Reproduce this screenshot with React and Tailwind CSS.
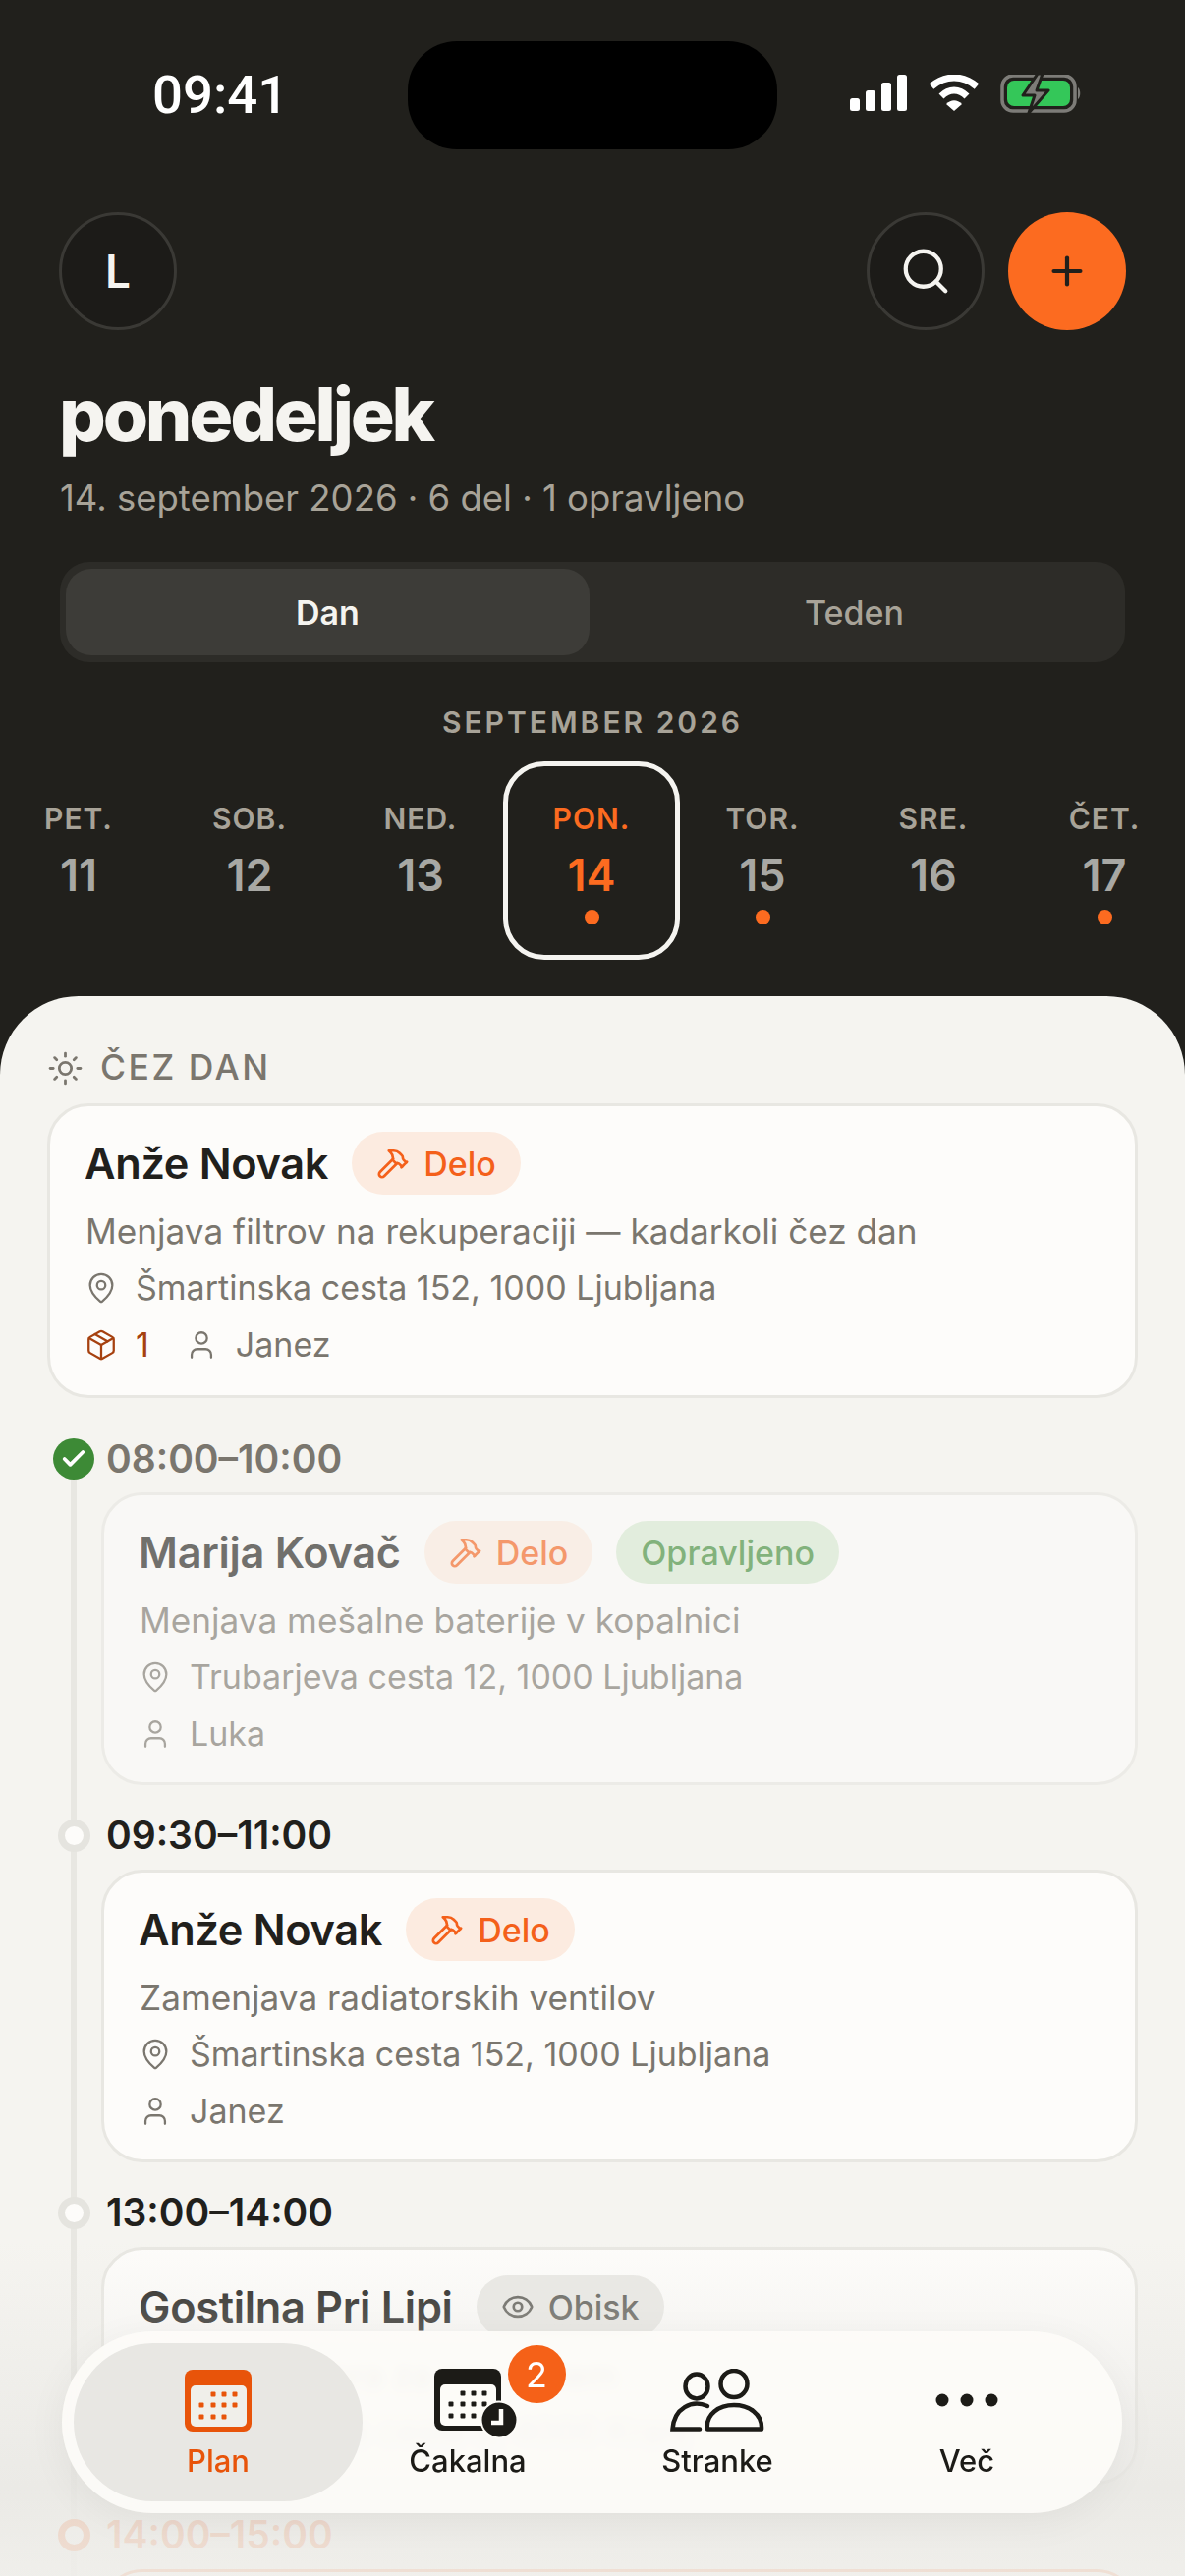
import React from 'react';
import { Hammer, MapPin, User, Package, Eye, Sun, Search, Plus, Check } from 'lucide-react';

const days = [
  { label: 'PET.', num: '11' },
  { label: 'SOB.', num: '12' },
  { label: 'NED.', num: '13' },
  { label: 'PON.', num: '14', dot: true, active: true },
  { label: 'TOR.', num: '15', dot: true },
  { label: 'SRE.', num: '16' },
  { label: 'ČET.', num: '17', dot: true },
];

function StatusIcons() {
  return (
    <svg width="235" height="40" viewBox="0 0 235 40" fill="none">
      {/* signal */}
      <rect x="0" y="24" width="10" height="13" rx="2.5" fill="#fff" />
      <rect x="16" y="16" width="10" height="21" rx="2.5" fill="#fff" />
      <rect x="32" y="8" width="10" height="29" rx="2.5" fill="#fff" />
      <rect x="48" y="0" width="10" height="37" rx="2.5" fill="#fff" />
      {/* wifi */}
      <path d="M83 9 C97 -3 115 -3 129 9" stroke="#fff" strokeWidth="7" transform="translate(0 3)" />
      <path d="M93 20 C101 12 111 12 119 20" stroke="#fff" strokeWidth="7" transform="translate(0 2)" />
      <path d="M98 30 C103 25 109 25 114 30 L106 37 Z" fill="#fff" />
      {/* battery */}
      <rect x="155" y="1" width="74" height="36" rx="11" stroke="#7d7c78" strokeWidth="3.5" />
      <path d="M232 13 C235 15 235 23 232 25 Z" fill="#7d7c78" />
      <rect x="160" y="6" width="64" height="26" rx="7" fill="#34c759" />
      <path d="M191 -1 L176 21 L188 21 L182 39 L202 16 L190 16 L196 -1 Z" fill="#7d7c78" stroke="#21201c" strokeWidth="3" strokeLinejoin="round" />
    </svg>
  );
}

function Meta({ icon: Icon, children, className = 'text-[#7a766e]' }) {
  return (
    <div className={`flex h-[58px] items-center text-[34px] ${className}`}>
      <Icon className="mr-[18px] size-[34px] shrink-0" strokeWidth={1.6} />
      {children}
    </div>
  );
}

function Badge({ icon: Icon, children, className }) {
  return (
    <span className={`flex h-[64px] items-center rounded-full px-[25px] text-[34px] font-medium ${className}`}>
      {Icon && <Icon className="mr-[14px] size-[34px]" strokeWidth={1.9} />}
      {children}
    </span>
  );
}

function Card({ name, badges, desc, address, person, parts, className = '', h = 'h-[298px]', nameColor = 'text-[#21201c]' }) {
  return (
    <div className={`rounded-[42px] border-[3px] border-[#e8e7e2] bg-[#fdfcfa] pl-[35px] pt-[26px] ${h} ${className}`}>
      <div className="mb-[7px] flex items-center gap-[24px]">
        <div className={`text-[43.3px] font-semibold tracking-[-0.3px] ${nameColor}`}>{name}</div>
        {badges}
      </div>
      <div className="ml-[1px] flex h-[58px] items-center text-[35.2px] text-[#7a766e]">{desc}</div>
      <Meta icon={MapPin}>{address}</Meta>
      {(person || parts) && (
        <div className="flex items-center gap-[36px]">
          {parts && (
            <Meta icon={Package} className="text-[#a6410f]">
              {parts}
            </Meta>
          )}
          {person && <Meta icon={User}>{person}</Meta>}
        </div>
      )}
    </div>
  );
}

function TimeRow({ time, dot, className = 'text-[#21201c]' }) {
  return (
    <div className={`flex h-[50px] items-center text-[39px] font-semibold ${className}`}>
      <div className="flex w-[60px] shrink-0 justify-center pr-[6px]">{dot}</div>
      {time}
    </div>
  );
}

const ringDot = <span className="block size-[33px] rounded-full border-[7px] border-[#e5e4df] bg-[#fdfcfa]" />;

function CalendarGlyph({ color, panel }) {
  const row = (y, xs) => xs.map((x) => <rect key={`${x}-${y}`} x={x - 2.5} y={y - 2.5} width="5" height="5" rx="1" fill={color} />);
  return (
    <>
      <rect x="0" y="0" width="68" height="63" rx="8" fill={color} />
      <rect x="6" y="16" width="57" height="42" rx="5" fill={panel} />
      {row(25, [29, 40, 51])}
      {row(36, [17, 29, 40, 51])}
      {row(48, [17, 29, 40])}
    </>
  );
}

function NavItem({ label, active, children }) {
  return (
    <div className="flex w-[254px] flex-col items-center">
      <div className="relative flex h-[64px] items-center justify-center">{children}</div>
      <div className={`mt-[12px] text-[31px] font-medium leading-[36px] ${active ? 'text-[#e8540a]' : 'text-[#1c1b17]'}`}>{label}</div>
    </div>
  );
}

export default function App() {
  return (
    <div className="relative h-[2622px] w-[1206px] overflow-hidden bg-[#21201c] font-['Inter',sans-serif]">
      {/* status bar */}
      <div className="grid grid-cols-[415px_376px_1fr] pt-[42px]">
        <div className="flex h-[110px] items-center pl-[155px] font-['Roboto',sans-serif] text-[54.5px] font-medium text-white">09:41</div>
        <div className="h-[110px] rounded-[50px] bg-black" />
        <div className="flex h-[110px] items-center pb-[2px] pl-[74px]">
          <StatusIcons />
        </div>
      </div>

      {/* header */}
      <div className="mt-[64px] flex items-center justify-between px-[60px]">
        <div className="flex size-[120px] items-center justify-center rounded-full border-[3px] border-[#3a3935] bg-[#1c1b18] text-[46px] font-semibold text-[#f5f4f0]">L</div>
        <div className="flex gap-[24px]">
          <div className="flex size-[120px] items-center justify-center rounded-full border-[3px] border-[#3a3935] bg-[#1c1b18]">
            <Search className="size-[54px] text-[#f5f4f0]" strokeWidth={1.9} />
          </div>
          <div className="flex size-[120px] items-center justify-center rounded-full bg-[#fc6b20]">
            <Plus className="size-[46px] text-[#21201c]" strokeWidth={2.2} />
          </div>
        </div>
      </div>
      <div className="mt-[41px] px-[60px] text-[75px] font-extrabold leading-[90px] tracking-[-3.2px] text-[#f5f4f0]">ponedeljek</div>
      <div className="mt-[16px] px-[61px] text-[36.5px] leading-[48px] text-[#a8a398]">14. september 2026 · 6 del · 1 opravljeno</div>

      {/* segmented control */}
      <div className="mx-[61px] mt-[41px] flex h-[102px] items-center rounded-[30px] bg-[#2d2c28] px-[6px] text-[34px] font-semibold">
        <div className="flex h-[88px] w-[533px] items-center justify-center rounded-[26px] bg-[#3d3c38] text-[#f5f4f0]">Dan</div>
        <div className="flex flex-1 items-center justify-center font-medium text-[#a8a398]">Teden</div>
      </div>

      <div className="mb-[20px] mt-[41px] h-[40px] text-center text-[30px] font-semibold leading-[40px] tracking-[3px] text-[#a8a398]">SEPTEMBER 2026</div>

      {/* week strip */}
      <div className="ml-[-7px] grid w-[1218px] grid-cols-7">
        {days.map((d) => (
          <div key={d.num} className="flex justify-center">
            <div className={`-mx-[3px] flex h-[202px] w-[180px] shrink-0 flex-col items-center rounded-[42px] ${d.active ? 'border-[5px] border-[#f5f4f0] pt-[37px]' : 'pt-[42px]'}`}>
              <div className={`h-[32px] text-[30px] font-semibold leading-[32px] tracking-[1px] ${d.active ? 'text-[#fc6b20]' : 'text-[#a8a398]'}`}>{d.label}</div>
              <div className={`mt-[17px] h-[50px] text-[45px] font-semibold leading-[50px] ${d.active ? 'text-[#fc6b20]' : 'text-[#a8a8a4]'}`}>{d.num}</div>
              {d.dot && <div className="mt-[10px] size-[15px] rounded-full bg-[#fc6b20]" />}
            </div>
          </div>
        ))}
      </div>

      {/* sheet */}
      <div className="mt-[37px] h-[1608px] overflow-hidden rounded-t-[80px] bg-[#f5f4f0] px-[48px] pt-[53px]">
        <div className="mb-[16px] flex h-[40px] items-center text-[35.5px] font-medium tracking-[2.5px] text-[#7a766e]">
          <Sun className="mr-[17px] size-[37px]" strokeWidth={1.8} />
          ČEZ DAN
        </div>
        <Card
          name="Anže Novak"
          h="h-[300px]"
          badges={<Badge icon={Hammer} className="bg-[#fcebe0] text-[#f4601a]">Delo</Badge>}
          desc="Menjava filtrov na rekuperaciji — kadarkoli čez dan"
          address="Šmartinska cesta 152, 1000 Ljubljana"
          parts="1"
          person="Janez"
        />

        {/* timeline */}
        <div className="relative mt-[37px]">
          <div className="absolute bottom-0 left-[24px] top-[20px] w-[6px] bg-[#e8e7e2]" />
          <div className="relative">
            <TimeRow
              time="08:00–10:00"
              className="text-[#7a766e]"
              dot={
                <span className="flex size-[42px] items-center justify-center rounded-full bg-[#3d8a36]">
                  <Check className="size-[28px] text-white" strokeWidth={3.2} />
                </span>
              }
            />
            <div className="mb-[26px] ml-[55px] mt-[9px]">
              <Card
                name="Marija Kovač"
                className="opacity-[.62]"
                badges={
                  <>
                    <Badge icon={Hammer} className="bg-[#fcebe0] text-[#f4601a]">Delo</Badge>
                    <Badge className="bg-[#d8ead3] text-[#3d8a36]">Opravljeno</Badge>
                  </>
                }
                desc="Menjava mešalne baterije v kopalnici"
                address="Trubarjeva cesta 12, 1000 Ljubljana"
                person="Luka"
              />
            </div>

            <TimeRow time="09:30–11:00" dot={ringDot} />
            <div className="mb-[26px] ml-[55px] mt-[10px]">
              <Card
                name="Anže Novak"
                badges={<Badge icon={Hammer} className="bg-[#fcebe0] text-[#f4601a]">Delo</Badge>}
                desc="Zamenjava radiatorskih ventilov"
                address="Šmartinska cesta 152, 1000 Ljubljana"
                person="Janez"
              />
            </div>

            <TimeRow time="13:00–14:00" dot={ringDot} />
            <div className="mb-[26px] ml-[55px] mt-[10px]">
              <Card
                name="Gostilna Pri Lipi"
                h="h-[242px]"
                badges={<Badge icon={Eye} className="bg-[#e9e8e4] text-[#5f5e58]">Obisk</Badge>}
                desc="Ogled prostora za nov sistem"
                address="Prešernova cesta 8, 4000 Kranj"
              />
            </div>

            <TimeRow
              time="14:00–15:00"
              className="text-[#f4601a]"
              dot={<span className="block size-[33px] rounded-full border-[7px] border-[#f4601a] bg-[#fdfcfa]" />}
            />
            <div className="ml-[55px] mt-[10px] h-[298px] rounded-[42px] border-[3px] border-[#f4601a] bg-[#fdfcfa]" />
          </div>
        </div>
      </div>

      {/* fade behind the tab bar */}
      <div className="pointer-events-none absolute inset-x-0 bottom-0 h-[340px] bg-gradient-to-b from-[#e9e8e4]/0 via-[#e9e8e4]/85 via-75% to-[#efeeea]/90" />

      {/* tab bar */}
      <div className="absolute bottom-[64px] left-[63px] flex h-[185px] w-[1079px] items-center rounded-full bg-[#fdfcf8]/90 shadow-[0_8px_40px_rgba(0,0,0,0.05)] backdrop-blur-[6px]">
        <div className="absolute bottom-[12px] left-[12px] h-[161px] w-[294px] rounded-full bg-[#e8e7e3]" />
        <div className="relative flex w-full items-center pl-[32px] pt-[3px]">
          <NavItem label="Plan" active>
            <svg width="68" height="63" viewBox="0 0 68 63">
              <CalendarGlyph color="#e8540a" panel="#f0efea" />
            </svg>
          </NavItem>
          <NavItem label="Čakalna">
            <svg width="88" height="72" viewBox="0 0 88 72" className="mt-[8px] ml-[19px]">
              <CalendarGlyph color="#1c1b17" panel="#fdfcf8" />
              <circle cx="66" cy="52" r="18.5" fill="#1c1b17" stroke="#fdfcf8" strokeWidth="2" />
              <path d="M68 41 V55 H58" fill="none" stroke="#fdfcf8" strokeWidth="4.5" />
            </svg>
            <span className="absolute left-[94px] top-[-24px] flex size-[59px] items-center justify-center rounded-full bg-[#f56118] text-[36px] text-white">2</span>
          </NavItem>
          <NavItem label="Stranke">
            <svg width="96" height="64" viewBox="0 0 96 64" fill="none" stroke="#1c1b17" strokeWidth="4.5">
              <ellipse cx="27" cy="18" rx="11.5" ry="12.5" />
              <ellipse cx="65" cy="15.5" rx="13.5" ry="13.5" />
              <path d="M38 38 C22 31 4 40 2.500 61.500 H30" strokeLinecap="round" />
              <path d="M38 61.500 C36 46 50 37 65 37 C80 37 94 46 93 61.500 Z" strokeLinejoin="round" />
            </svg>
          </NavItem>
          <NavItem label="Več">
            <svg width="64" height="14" viewBox="0 0 64 14" fill="#1c1b17">
              <circle cx="7" cy="7" r="6.500" />
              <circle cx="32" cy="7" r="6.500" />
              <circle cx="57" cy="7" r="6.500" />
            </svg>
          </NavItem>
        </div>
      </div>
    </div>
  );
}
